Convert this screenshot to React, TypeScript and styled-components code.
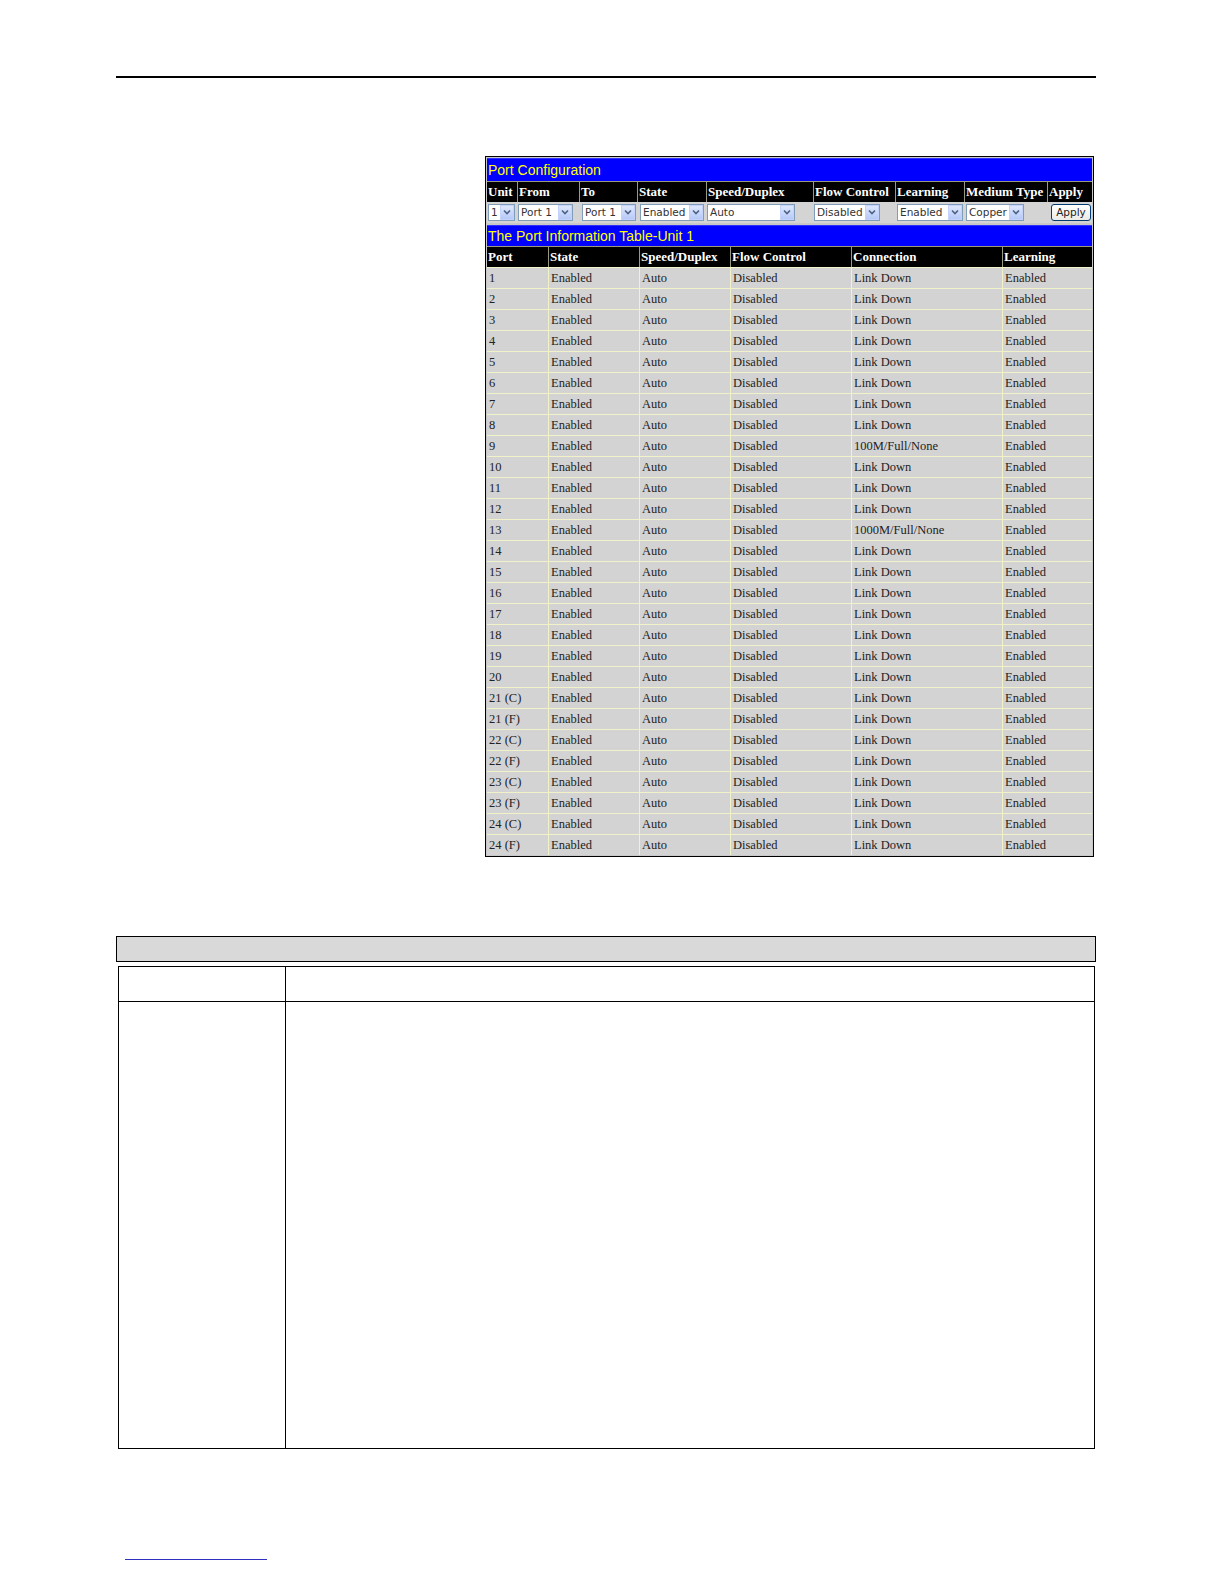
import React from "react";
import styled, { createGlobalStyle } from "styled-components";

const Global = createGlobalStyle`
  html, body { margin: 0; padding: 0; background: #fff; overflow: hidden; }
  body { font-family: "Liberation Serif", serif; }
`;

const Page = styled.div`
  width: 1224px;
  height: 1584px;
  padding-top: 76px;
  box-sizing: border-box;
  display: flex;
  flex-direction: column;
  overflow: hidden;
`;

const TopRule = styled.div`
  margin-left: 116px;
  width: 980px;
  height: 1.5px;
  background: #000;
`;

const Panel = styled.div`
  margin: 78px 0 0 485px;
  width: 609px;
  box-sizing: border-box;
  border: 1px solid #000;
  padding: 1px;
  background: #c8c8c8;
  display: flex;
  flex-direction: column;
`;

const TitleBar = styled.div<{ $h: number }>`
  height: ${(p) => p.$h}px;
  background: #0000ff;
  color: #ffff00;
  font-family: "Liberation Sans", Arial, sans-serif;
  font-size: 14px;
  display: flex;
  align-items: center;
  padding-left: 1px;
  border-top: 1px solid #3030ff;
  box-sizing: border-box;
`;

const Grid = styled.div<{ $cols: string }>`
  display: grid;
  grid-template-columns: ${(p) => p.$cols};
`;

const HeadCell = styled.div`
  height: 21px;
  background: #000;
  color: #fff;
  font-weight: bold;
  font-size: 13px;
  display: flex;
  align-items: center;
  padding-left: 1px;
  box-sizing: border-box;
  border-left: 1px solid #9a9a80;
  border-top: 1px solid #9a9a80;
  white-space: nowrap;
  overflow: hidden;
  &:first-child { border-left: none; }
`;

const CtrlCell = styled.div`
  height: 21px;
  background: #d4d4d4;
  display: flex;
  align-items: center;
  box-sizing: border-box;
  padding-left: 1px;
`;

const Spacer = styled.div`
  height: 2px;
`;

const BodyCell = styled.div<{ $first?: boolean }>`
  height: 21px;
  background: #d3d3d3;
  color: #222;
  font-size: 12.5px;
  display: flex;
  align-items: center;
  padding: 1px 0 0 2px;
  box-sizing: border-box;
  border-top: 1px solid #f2f2c8;
  border-left: ${(p) => (p.$first ? "none" : "1px solid #f2f2c8")};
  white-space: nowrap;
`;

const SelectBox = styled.div<{ $w: number; $ml: number }>`
  width: ${(p) => p.$w}px;
  margin-left: ${(p) => p.$ml}px;
  height: 17px;
  box-sizing: border-box;
  border: 1px solid #7f9db9;
  background: #fff;
  display: flex;
  align-items: center;
  justify-content: space-between;
  font-family: "DejaVu Sans", "Liberation Sans", sans-serif;
  font-size: 10.5px;
  color: #333;
  padding-left: 2px;
`;

const Arrow = styled.div`
  width: 14px;
  height: 15px;
  box-sizing: border-box;
  border: 1px solid #c3d3fd;
  background: linear-gradient(#dfe8fd, #b6c9f7);
  display: flex;
  align-items: center;
  justify-content: center;
`;

const ApplyBtn = styled.div`
  margin-left: 3px;
  width: 40px;
  height: 17px;
  box-sizing: border-box;
  border: 1px solid #003c74;
  border-radius: 3px;
  background: linear-gradient(#fff, #ecebe6);
  font-family: "DejaVu Sans", "Liberation Sans", sans-serif;
  font-size: 10.5px;
  color: #222;
  display: flex;
  align-items: center;
  justify-content: center;
`;

const GrayBar = styled.div`
  margin: 79px 0 0 116px;
  width: 980px;
  height: 26px;
  box-sizing: border-box;
  border: 1.5px solid #000;
  background: #d9d9d9;
`;

const DescTable = styled.div`
  margin: 4px 0 0 118px;
  width: 977px;
  height: 483px;
  box-sizing: border-box;
  border: 1.5px solid #000;
  display: grid;
  grid-template-columns: 167px 1fr;
  grid-template-rows: 35px 1fr;
`;

const DescCell = styled.div<{ $left?: boolean; $top?: boolean }>`
  border-right: ${(p) => (p.$left ? "1.5px solid #000" : "none")};
  border-bottom: ${(p) => (p.$top ? "1.5px solid #000" : "none")};
`;

const FootLink = styled.div`
  margin: 110px 0 0 125px;
  width: 142px;
  height: 1px;
  background: #3030c0;
`;

const Chevron = () => (
  <svg width="8" height="6" viewBox="0 0 8 6">
    <path d="M1 1.5 L4 4.5 L7 1.5" fill="none" stroke="#4d6185" strokeWidth="1.6" />
  </svg>
);

const Select = ({ w, ml, label }: { w: number; ml: number; label: string }) => (
  <SelectBox $w={w} $ml={ml}>
    <span>{label}</span>
    <Arrow>
      <Chevron />
    </Arrow>
  </SelectBox>
);

const cfgCols = "30px 62px 58px 69px 107px 82px 69px 83px 45px";
const infoCols = "61px 91px 91px 121px 151px 90px";

const cfgHeads = ["Unit", "From", "To", "State", "Speed/Duplex", "Flow Control", "Learning", "Medium Type", "Apply"];
const infoHeads = ["Port", "State", "Speed/Duplex", "Flow Control", "Connection", "Learning"];

const ports: string[] = [];
for (let i = 1; i <= 20; i++) ports.push(String(i));
["21", "22", "23", "24"].forEach((n) => {
  ports.push(`${n} (C)`);
  ports.push(`${n} (F)`);
});

const conn = (p: string) => (p === "9" ? "100M/Full/None" : p === "13" ? "1000M/Full/None" : "Link Down");

export default function App() {
  return (
    <Page>
      <Global />
      <TopRule />
      <Panel>
        <TitleBar $h={23}>Port Configuration</TitleBar>
        <Grid $cols={cfgCols}>
          {cfgHeads.map((h) => (
            <HeadCell key={h}>{h}</HeadCell>
          ))}
          <CtrlCell><Select w={27} ml={0} label="1" /></CtrlCell>
          <CtrlCell><Select w={55} ml={0} label="Port 1" /></CtrlCell>
          <CtrlCell><Select w={54} ml={2} label="Port 1" /></CtrlCell>
          <CtrlCell><Select w={64} ml={2} label="Enabled" /></CtrlCell>
          <CtrlCell><Select w={88} ml={0} label="Auto" /></CtrlCell>
          <CtrlCell><Select w={66} ml={0} label="Disabled" /></CtrlCell>
          <CtrlCell><Select w={66} ml={1} label="Enabled" /></CtrlCell>
          <CtrlCell><Select w={58} ml={1} label="Copper" /></CtrlCell>
          <CtrlCell><ApplyBtn>Apply</ApplyBtn></CtrlCell>
        </Grid>
        <Spacer />
        <TitleBar $h={21}>The Port Information Table-Unit 1</TitleBar>
        <Grid $cols={infoCols}>
          {infoHeads.map((h) => (
            <HeadCell key={h}>{h}</HeadCell>
          ))}
          {ports.map((p) => (
            <React.Fragment key={p}>
              <BodyCell $first>{p}</BodyCell>
              <BodyCell>Enabled</BodyCell>
              <BodyCell>Auto</BodyCell>
              <BodyCell>Disabled</BodyCell>
              <BodyCell>{conn(p)}</BodyCell>
              <BodyCell>Enabled</BodyCell>
            </React.Fragment>
          ))}
        </Grid>
      </Panel>
      <GrayBar />
      <DescTable>
        <DescCell $left $top />
        <DescCell $top />
        <DescCell $left />
        <DescCell />
      </DescTable>
      <FootLink />
    </Page>
  );
}
